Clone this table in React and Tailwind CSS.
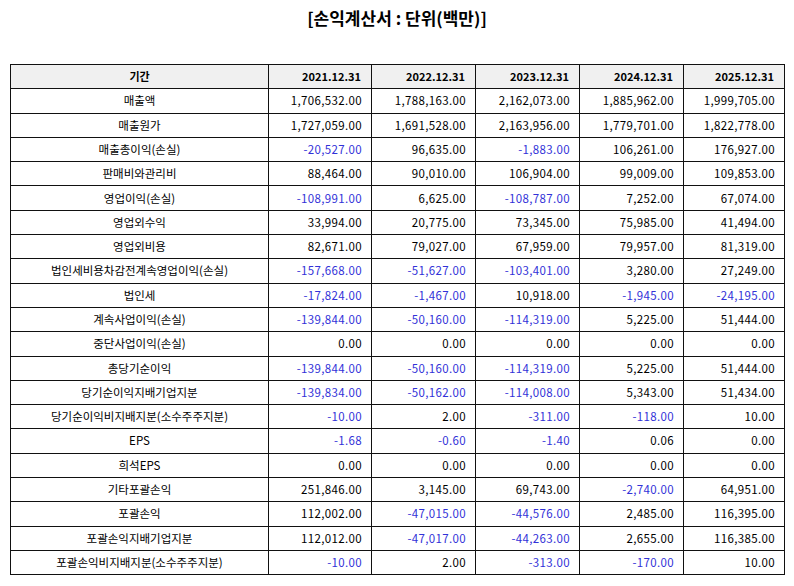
import React from "react";

const years = ["2021.12.31", "2022.12.31", "2023.12.31", "2024.12.31", "2025.12.31"];

const rows = [
  ["매출액", ["1,706,532.00", "1,788,163.00", "2,162,073.00", "1,885,962.00", "1,999,705.00"]],
  ["매출원가", ["1,727,059.00", "1,691,528.00", "2,163,956.00", "1,779,701.00", "1,822,778.00"]],
  ["매출총이익(손실)", ["-20,527.00", "96,635.00", "-1,883.00", "106,261.00", "176,927.00"]],
  ["판매비와관리비", ["88,464.00", "90,010.00", "106,904.00", "99,009.00", "109,853.00"]],
  ["영업이익(손실)", ["-108,991.00", "6,625.00", "-108,787.00", "7,252.00", "67,074.00"]],
  ["영업외수익", ["33,994.00", "20,775.00", "73,345.00", "75,985.00", "41,494.00"]],
  ["영업외비용", ["82,671.00", "79,027.00", "67,959.00", "79,957.00", "81,319.00"]],
  ["법인세비용차감전계속영업이익(손실)", ["-157,668.00", "-51,627.00", "-103,401.00", "3,280.00", "27,249.00"]],
  ["법인세", ["-17,824.00", "-1,467.00", "10,918.00", "-1,945.00", "-24,195.00"]],
  ["계속사업이익(손실)", ["-139,844.00", "-50,160.00", "-114,319.00", "5,225.00", "51,444.00"]],
  ["중단사업이익(손실)", ["0.00", "0.00", "0.00", "0.00", "0.00"]],
  ["총당기순이익", ["-139,844.00", "-50,160.00", "-114,319.00", "5,225.00", "51,444.00"]],
  ["당기순이익지배기업지분", ["-139,834.00", "-50,162.00", "-114,008.00", "5,343.00", "51,434.00"]],
  ["당기순이익비지배지분(소수주주지분)", ["-10.00", "2.00", "-311.00", "-118.00", "10.00"]],
  ["EPS", ["-1.68", "-0.60", "-1.40", "0.06", "0.00"]],
  ["희석EPS", ["0.00", "0.00", "0.00", "0.00", "0.00"]],
  ["기타포괄손익", ["251,846.00", "3,145.00", "69,743.00", "-2,740.00", "64,951.00"]],
  ["포괄손익", ["112,002.00", "-47,015.00", "-44,576.00", "2,485.00", "116,395.00"]],
  ["포괄손익지배기업지분", ["112,012.00", "-47,017.00", "-44,263.00", "2,655.00", "116,385.00"]],
  ["포괄손익비지배지분(소수주주지분)", ["-10.00", "2.00", "-313.00", "-170.00", "10.00"]],
];

const widths = ["w-[258px]", "w-[103px]", "w-[104px]", "w-[104px]", "w-[104px]", "w-[101px]"];

function App() {
  return (
    <div className="w-[794px] h-[586px] bg-white text-black font-['Malgun_Gothic','Noto_Sans_CJK_KR',sans-serif]">
      <h1 className="pt-[5px] h-[64px] text-center text-[17px] font-bold leading-[26px]">
        [손익계산서 : 단위(백만)]
      </h1>
      <table className="ml-[10px] w-[774px] table-fixed border-collapse text-[11.5px]">
        <thead>
          <tr className="bg-[#f0f0f0]">
            <th className={`${widths[0]} h-[24.3px] border border-[#111] text-center text-[11px] font-bold`}>기간</th>
            {years.map((y, i) => (
              <th key={y} className={`${widths[i + 1]} border border-[#111] pr-[10px] text-right text-[11px] font-bold`}>
                {y}
              </th>
            ))}
          </tr>
        </thead>
        <tbody>
          {rows.map(([label, vals]) => (
            <tr key={label}>
              <td className="h-[24.3px] border border-[#111] text-center">{label}</td>
              {vals.map((v, i) => (
                <td
                  key={i}
                  className={`border border-[#111] pr-[9px] text-right tracking-[0.35px] ${v.startsWith("-") ? "text-[#3232d8]" : ""}`}
                >
                  {v}
                </td>
              ))}
            </tr>
          ))}
        </tbody>
      </table>
    </div>
  );
}

export default App;
